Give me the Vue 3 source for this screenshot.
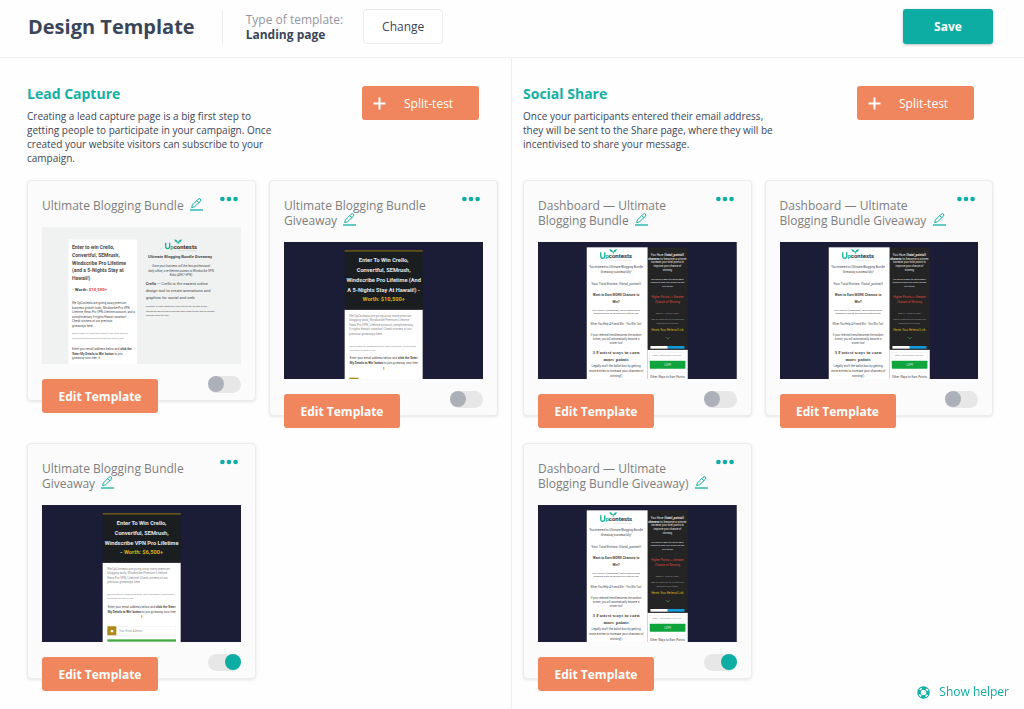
<script setup>
import { reactive } from 'vue'

const t = (x, y, size, text, cls = '') => ({ x, y, size, cls, parts: [{ text }] })
const mix = (x, y, size, cls, ...parts) => ({ x, y, size, cls, parts })

const entryLines = [
  t(90, 67, 15, 'Enter to win Crello,', 'bold'),
  t(90, 90, 15, 'Convertful, SEMrush,', 'bold'),
  t(90, 113, 15, 'Windscribe Pro Lifetime', 'bold'),
  t(90, 136, 15, '(and a 5-Nights Stay at', 'bold'),
  t(90, 159, 15, 'Hawaii!)', 'bold'),
  mix(90, 193, 13, 'bold', { text: '- Worth: ' }, { text: '$10,500+', cls: 'red' }),
  t(90, 231, 9, 'We UpContests are giving away premium'),
  t(90, 245, 9, 'business growth tools, Windscribe Pro VPN'),
  t(90, 258, 9, 'Lifetime, Keos Pro VPN Lifetime account, and a'),
  t(90, 272, 9, 'complimentary 5-nights Hawaii vacation!'),
  t(90, 286, 9, 'Check winners of our previous'),
  t(90, 300, 9, 'giveaways here.'),
  t(90, 322, 7, 'Bonus prizes for $500 participants. Sign up to get your', 'soft'),
  t(90, 335, 7, 'free great Design/Search winning win order to see.', 'soft'),
  mix(90, 369, 9, '', { text: 'Enter your email address below and ' }, { text: 'click the', cls: 'bold' }),
  mix(90, 383, 9, '', { text: "'Enter My Details to Win' button", cls: 'bold' }, { text: ' to join' }),
  t(90, 396, 9, 'giveaway now free'),
  t(414, 93, 12, 'Ultimate Blogging Bundle Giveaway', 'mid bold'),
  t(417, 120, 9, 'Once your business will the less professional', 'mid italic'),
  t(417, 134, 9, 'daily office, a re-lifetime access to Windscribe VPN', 'mid italic'),
  t(417, 147, 9, 'Koko (4961-VPN)', 'mid italic'),
  mix(311, 174, 12, '', { text: 'Crello', cls: 'bold' }, { text: ' — Crello is the easiest online' }),
  t(311, 195, 12, 'design tool to create animations and'),
  t(311, 215, 12, 'graphics for social and web'),
  t(311, 241, 7, 'Normally $10 per month per user, but you will be able to win'),
  t(311, 255, 7, 'lifetime access to Crello PRO and save $360 for this and all access'),
  t(311, 268, 7, 'licenses users for free.'),
]

const darkLines = [
  t(299, 61, 17, 'Enter To Win Crello,', 'mid bold white'),
  t(299, 90, 17, 'Convertful, SEMrush,', 'mid bold white'),
]

const hawaiiLines = [
  ...darkLines,
  t(299, 120, 17, 'Windscribe Pro Lifetime (And', 'mid bold white'),
  t(299, 149, 17, 'A 5-Nights Stay At Hawaii!) -', 'mid bold white'),
  t(299, 177, 17, 'Worth: $10,500+', 'mid bold gold'),
  t(196, 224, 9, 'We UpContests are giving away more premium', 'soft'),
  t(196, 238, 9, 'blogging tools, Windscribe Premium Lifetime', 'soft'),
  t(196, 251, 9, 'Keos Pro VPN, Lifetime account, complimentary', 'soft'),
  t(196, 265, 9, '5-nights Hawaii vacation! Check winners of our', 'soft'),
  t(196, 278, 9, 'previous giveaways here.', 'soft'),
  t(196, 314, 7, 'Bonus prizes for $500 participant. Open worldwide. No purchase', 'soft'),
  t(196, 326, 7, 'necessary to enter to win.', 'soft'),
  mix(299, 351, 9, 'mid', { text: 'Enter your email address below and ' }, { text: "click the 'Enter", cls: 'bold' }),
  mix(299, 367, 9, 'mid', { text: "My Details to Win' button", cls: 'bold' }, { text: ' to join giveaway now free' }),
]

const vpnLines = [
  ...darkLines,
  t(299, 120, 17, 'Windscribe VPN Pro Lifetime', 'mid bold white'),
  mix(299, 148, 17, 'mid bold white', { text: '- ' }, { text: 'Worth: $6,500+', cls: 'gold' }),
  t(196, 194, 9, 'We UpContests are giving away many premium', 'soft'),
  t(196, 207, 9, 'blogging tools, Windscribe Premium Lifetime', 'soft'),
  t(196, 221, 9, 'Keos Pro VPN, Lifetime! Check winners of our', 'soft'),
  t(196, 234, 9, 'previous giveaways here.', 'soft'),
  t(196, 270, 7, 'Bonus prizes for $500 participant. Open worldwide. No purchase', 'soft'),
  t(196, 282, 7, 'necessary to enter to win.', 'soft'),
  mix(299, 308, 9, 'mid', { text: 'Enter your email address below and ' }, { text: "click the 'Enter", cls: 'bold' }),
  mix(299, 323, 9, 'mid', { text: "My Details to Win' button", cls: 'bold' }, { text: ' to join giveaway now free' }),
  t(232, 381, 8, 'Your Email Address', 'pale'),
]

const shareLines = [
  t(235, 79, 9, 'You entered to Ultimate Blogging Bundle', 'mid'),
  t(235, 94, 9, 'Giveaway successfully!', 'mid'),
  t(235, 128, 10, 'Your Total Entries: {{total_points}}', 'mid'),
  t(235, 162, 10, 'Want to Earn MORE Chances to', 'mid bold'),
  t(235, 182, 10, 'Win?', 'mid bold'),
  t(235, 206, 7, "You'll receive {{campaign}} bonus entries when", 'mid'),
  t(235, 217, 7, 'someone signs up through your referral link!', 'mid'),
  t(235, 250, 8, 'When You Help A Friend Win - You Win Too!', 'mid'),
  t(235, 281, 8, 'If your referred friend becomes the random', 'mid'),
  t(235, 294, 8, 'winner, you will automatically become a', 'mid'),
  t(235, 306, 8, 'winner too!', 'mid'),
  t(235, 337, 15, '3 Fastest ways to earn', 'mid bold serif'),
  t(235, 356, 15, 'more points', 'mid bold serif'),
  t(235, 376, 9, 'Legally stuff the ballot box by getting', 'mid'),
  t(235, 391, 9, 'more entries to increase your chances of', 'mid'),
  t(235, 405, 9, 'winning!)', 'mid'),
  mix(389, 41, 9, 'mid white', { text: 'You Have ' }, { text: '{{total_points}}', cls: 'bold' }),
  mix(389, 53, 9, 'mid white', { text: 'chances', cls: 'bold' }, { text: ' to become a winner' }),
  t(389, 64, 8, 'increase your total points to', 'mid white'),
  t(389, 75, 8, 'improve your chance of', 'mid white'),
  t(389, 86, 8, 'winning', 'mid white'),
  t(389, 113, 6, 'You should SHARE it to get as MANY', 'mid white'),
  t(389, 123, 6, 'chances to share your unique link with', 'mid white'),
  t(389, 134, 6, 'your friends', 'mid white'),
  t(389, 169, 9, 'Higher Points >> Greater', 'mid red'),
  t(389, 184, 9, 'Chance of Winning', 'mid red'),
  t(389, 217, 7, 'Step #1: Click or Copy!', 'mid pale'),
  t(389, 235, 6, 'Step #2: Share this link via email and', 'mid pale'),
  t(389, 246, 6, 'message to your friends.', 'mid pale'),
  t(389, 266, 9, "Here's Your Referral Link", 'mid yellow'),
  t(344, 343, 7, 'https://upcontests.com/link', 'soft'),
  t(390, 371, 8, 'COPY', 'mid white'),
  t(389, 407, 9, 'Other Ways to Earn Points', 'mid'),
]

const columns = reactive([
  {
    id: 'lead',
    title: 'Lead Capture',
    text: 'Creating a lead capture page is a big first step to getting people to participate in your campaign. Once created your website visitors can subscribe to your campaign.',
    cards: [
      { name: 'Ultimate Blogging Bundle', art: 'entry', lines: entryLines, active: false },
      { name: 'Ultimate Blogging Bundle Giveaway', art: 'hawaii', lines: hawaiiLines, active: false },
      { name: 'Ultimate Blogging Bundle Giveaway', art: 'vpn', lines: vpnLines, active: true },
    ],
  },
  {
    id: 'share',
    title: 'Social Share',
    text: 'Once your participants entered their email address, they will be sent to the Share page, where they will be incentivised to share your message.',
    cards: [
      { name: 'Dashboard — Ultimate Blogging Bundle', art: 'share', lines: shareLines, active: false },
      { name: 'Dashboard — Ultimate Blogging Bundle Giveaway', art: 'share', lines: shareLines, active: false },
      { name: 'Dashboard — Ultimate Blogging Bundle Giveaway)', art: 'share', lines: shareLines, active: true },
    ],
  },
])
</script>

<template>
  <div class="page">
    <header class="topbar">
      <h1>Design Template</h1>
      <div class="kind">
        <span>Type of template:</span>
        <strong>Landing page</strong>
      </div>
      <button class="change" type="button">Change</button>
      <button class="save" type="button">Save</button>
    </header>

    <main class="columns">
      <section v-for="col in columns" :key="col.id" class="column" :class="col.id">
        <div class="intro">
          <div class="copy">
            <h2>{{ col.title }}</h2>
            <p>{{ col.text }}</p>
          </div>
          <button class="split" type="button">
            <svg width="13" height="13" viewBox="0 0 13 13" aria-hidden="true">
              <path d="M6.5 0.5v12M0.5 6.5h12" stroke="#fff" stroke-width="2" />
            </svg>
            <span>Split-test</span>
          </button>
        </div>

        <div class="cards">
          <article v-for="(card, i) in col.cards" :key="i" class="card">
            <div class="card-head">
              <h3>
                {{ card.name }}
                <button class="pencil" type="button" aria-label="Rename">
                  <svg width="13" height="13" viewBox="0 0 39 39" fill="none" stroke="#12b0a4" stroke-width="3" stroke-linejoin="round" aria-hidden="true">
                    <path d="M5 29l2-8L24 4q4-4 7-1t0 7L14 26zM20 8l7 6" />
                    <path d="M0 36h39" stroke-width="4" />
                  </svg>
                </button>
              </h3>
              <button class="more" type="button" aria-label="More options">
                <svg width="18" height="8" viewBox="0 0 18 8" fill="#0bada4" aria-hidden="true">
                  <circle cx="2.4" cy="4" r="2.3" /><circle cx="9" cy="4" r="2.3" /><circle cx="15.6" cy="4" r="2.3" />
                </svg>
              </button>
            </div>

            <svg class="thumb" viewBox="0 0 597 411" preserveAspectRatio="xMidYMid slice" role="img" :aria-label="card.name">
              <g v-if="card.art === 'entry'">
                <rect width="597" height="411" fill="#f0f2f2" />
                <rect x="79" y="37" width="206" height="374" fill="#fff" />
                <path d="M168 389l5-1 2 8h-4z" fill="#efb33a" />
              </g>
              <g v-else-if="card.art === 'share'">
                <rect width="597" height="411" fill="#1b1c36" />
                <rect x="147" y="16" width="183" height="395" fill="#fff" />
                <rect x="330" y="323" width="120" height="88" fill="#fff" />
                <rect x="330" y="16" width="120" height="307" fill="#242425" />
                <path d="M384 285l6 6 6-6" fill="none" stroke="#2ba84a" stroke-width="2" />
                <rect x="338" y="312" width="52" height="8" fill="#fff" />
                <rect x="390" y="312" width="50" height="8" fill="#119bd8" />
                <rect x="336" y="331" width="107" height="20" fill="#fff" stroke="#e3e3e3" />
                <rect x="336" y="356" width="107" height="24" rx="2" fill="#0fa53c" />
                <path d="M334 392h112" stroke="#e5e5e5" />
              </g>
              <g v-else>
                <rect width="597" height="411" fill="#1b1c36" />
                <rect x="182" :y="card.art === 'vpn' ? 173 : 203" width="234" height="240" fill="#fff" />
                <rect x="182" y="24" width="234" :height="card.art === 'vpn' ? 149 : 179" fill="#1a1e21" />
                <rect x="182" y="24" width="234" height="5" fill="#65521d" />
                <g v-if="card.art === 'vpn'">
                  <rect x="196" y="364" width="206" height="27" fill="#fff" stroke="#e4e4e4" />
                  <rect x="196" y="364" width="27" height="27" rx="2" fill="#b08a16" />
                  <rect x="206" y="375" width="8" height="7" rx="2" fill="#fff" />
                  <rect x="196" y="403" width="206" height="7" fill="#45aa45" />
                  <path d="M297 331h4v8h-3z" fill="#dca928" />
                </g>
                <g v-else>
                  <rect x="196" y="407" width="27" height="4" fill="#b08a16" />
                  <path d="M297 375h4v8h-3z" fill="#dca928" />
                </g>
              </g>

              <g v-if="card.art === 'entry' || card.art === 'share'" :class="['brand', card.art]">
                <path d="M3 10v11q0 7 6 7t6-7V10" fill="none" stroke="#15b39a" stroke-width="4" />
                <text x="17" y="28" class="brand-name"><tspan class="teal">p</tspan>contests</text>
                <path d="M40 9q-2-8-11-9 1 9 10 10v4h3v-4q9-1 9-10-9 1-11 9z" fill="#15b39a" />
                <path d="M42 34h54" stroke="#bbb" />
              </g>

              <text v-for="(line, n) in card.lines" :key="n" :x="line.x" :y="line.y" :font-size="line.size" :class="line.cls"><tspan v-for="(part, k) in line.parts" :key="k" :class="part.cls">{{ part.text }}</tspan></text>
            </svg>

            <div class="card-foot">
              <button class="edit" type="button">Edit Template</button>
              <input v-model="card.active" class="toggle" type="checkbox" :aria-label="'Activate ' + card.name" />
            </div>
          </article>
        </div>
      </section>
    </main>

    <a class="helper" href="#">
      <svg width="13" height="13" viewBox="0 0 26 26" fill="none" aria-hidden="true">
        <circle cx="13" cy="13" r="9" stroke="#12ada4" stroke-width="7" />
        <circle cx="13" cy="13" r="9" stroke="#fff" stroke-width="3" stroke-dasharray="5 9.14" stroke-dashoffset="-4.5" />
      </svg>
      <span>Show helper</span>
    </a>
  </div>
</template>

<style>
body {
  background: #fefefe;
}
</style>

<style scoped>
* {
  box-sizing: border-box;
}
.page,
button {
  font-family: "Open Sans", "Noto Sans", sans-serif;
}
.page {
  color: #3b4559;
  font-size: 12px;
}
button {
  border: 0;
  padding: 0;
  background: none;
  font-size: 12px;
  cursor: pointer;
}
h1,
h2,
h3,
p {
  margin: 0;
}
.topbar {
  display: flex;
  align-items: center;
  min-height: 58px;
  padding: 9px 31px 13px 28px;
  border-bottom: 1px solid #efefef;
}
h1 {
  font-size: 20px;
  line-height: 34px;
  font-weight: 700;
}
.kind {
  display: flex;
  flex-direction: column;
  height: 34px;
  margin-left: 27px;
  padding: 2px 0 0 23px;
  border-left: 1px solid #ececec;
  line-height: 15px;
}
.kind span {
  color: #9497a1;
}
.change {
  width: 80px;
  height: 35px;
  margin-left: 20px;
  border: 1px solid #ebebeb;
  border-radius: 4px;
  background: #fff;
  color: #3b4559;
}
.save {
  width: 90px;
  height: 35px;
  margin-left: auto;
  border-radius: 3px;
  background: #0dada4;
  box-shadow: 0 1px 3px rgba(0, 0, 0, 0.25);
  color: #fff;
  font-weight: 700;
}
.columns {
  display: grid;
  grid-template-columns: 1fr 1fr;
  min-height: calc(100vh - 58px);
}
.column {
  padding: 28px 31px 16px 11px;
}
.column.lead {
  padding: 28px 13px 16px 27px;
  border-right: 1px solid #eeeeee;
}
.intro {
  display: flex;
  justify-content: space-between;
  align-items: flex-start;
  min-height: 94px;
  padding-right: 19px;
}
.copy {
  max-width: 258px;
}
h2 {
  color: #12b0a4;
  font-size: 14px;
  line-height: 16px;
  font-weight: 700;
}
.copy p {
  margin-top: 7px;
  font-size: 10px;
  line-height: 14px;
}
.split {
  display: flex;
  align-items: center;
  gap: 18px;
  width: 117px;
  height: 34px;
  padding-left: 11px;
  border-radius: 3px;
  background: #ef865e;
  color: #fff;
}
.cards {
  display: grid;
  grid-template-columns: 1fr 1fr;
  align-items: start;
  gap: 27px 13px;
}
.card {
  padding: 14px 14px 0;
  border: 1px solid #ececec;
  border-radius: 4px;
  background: #fbfbfb;
  box-shadow: 0 1px 3px rgba(0, 0, 0, 0.1);
}
.card-head {
  display: flex;
  align-items: flex-start;
  justify-content: space-between;
}
h3 {
  padding-top: 3px;
  color: #7e7e7e;
  font-size: 12px;
  line-height: 15px;
  font-weight: 400;
}
.pencil {
  height: 13px;
  margin-left: 3px;
  vertical-align: -1px;
}
.pencil svg,
.more svg {
  display: block;
}
.more {
  margin-right: 3px;
  flex: none;
}
.thumb {
  display: block;
  width: 100%;
  min-height: 137px;
  margin-top: 14px;
  font-family: Roboto, sans-serif;
}
.thumb text {
  fill: #4a4a4a;
}
.thumb .mid {
  text-anchor: middle;
}
.thumb .bold {
  font-weight: 700;
}
.thumb .italic {
  font-style: italic;
}
.thumb .serif {
  font-family: "Liberation Serif", serif;
}
.thumb .soft {
  fill: #8a8a8a;
}
.thumb .pale {
  fill: #9a9a9a;
}
.thumb .white {
  fill: #e4e4e4;
}
.thumb .gold {
  fill: #dcae18;
}
.thumb .yellow {
  fill: #d5b31c;
}
.thumb .red {
  fill: #dc4a38;
}
.brand.entry {
  transform: translate(368px, 37px);
}
.brand.share {
  transform: translate(186px, 21px);
}
.thumb .brand-name {
  font-size: 18px;
  font-weight: 700;
  fill: #333;
}
.thumb .brand-name .teal {
  fill: #15b39a;
}
.card-foot {
  display: flex;
  align-items: flex-start;
  justify-content: space-between;
  padding-top: 12px;
}
.edit {
  width: 116px;
  height: 34px;
  margin: 3px 0 -13px;
  border-radius: 3px;
  background: #ef865e;
  color: #fff;
  font-weight: 700;
}
.toggle {
  appearance: none;
  display: flex;
  width: 33px;
  height: 17px;
  margin: 0;
  border-radius: 9px;
  background: #e7e7e7;
  cursor: pointer;
}
.toggle::before {
  content: "";
  width: 16px;
  height: 16px;
  border-radius: 50%;
  background: #acb1b9;
}
.toggle:checked {
  justify-content: flex-end;
}
.toggle:checked::before {
  background: #0dada4;
}
.helper {
  position: fixed;
  right: 15px;
  bottom: 8px;
  display: flex;
  align-items: center;
  gap: 9px;
  color: #12ada4;
  line-height: 18px;
  text-decoration: none;
}
</style>
